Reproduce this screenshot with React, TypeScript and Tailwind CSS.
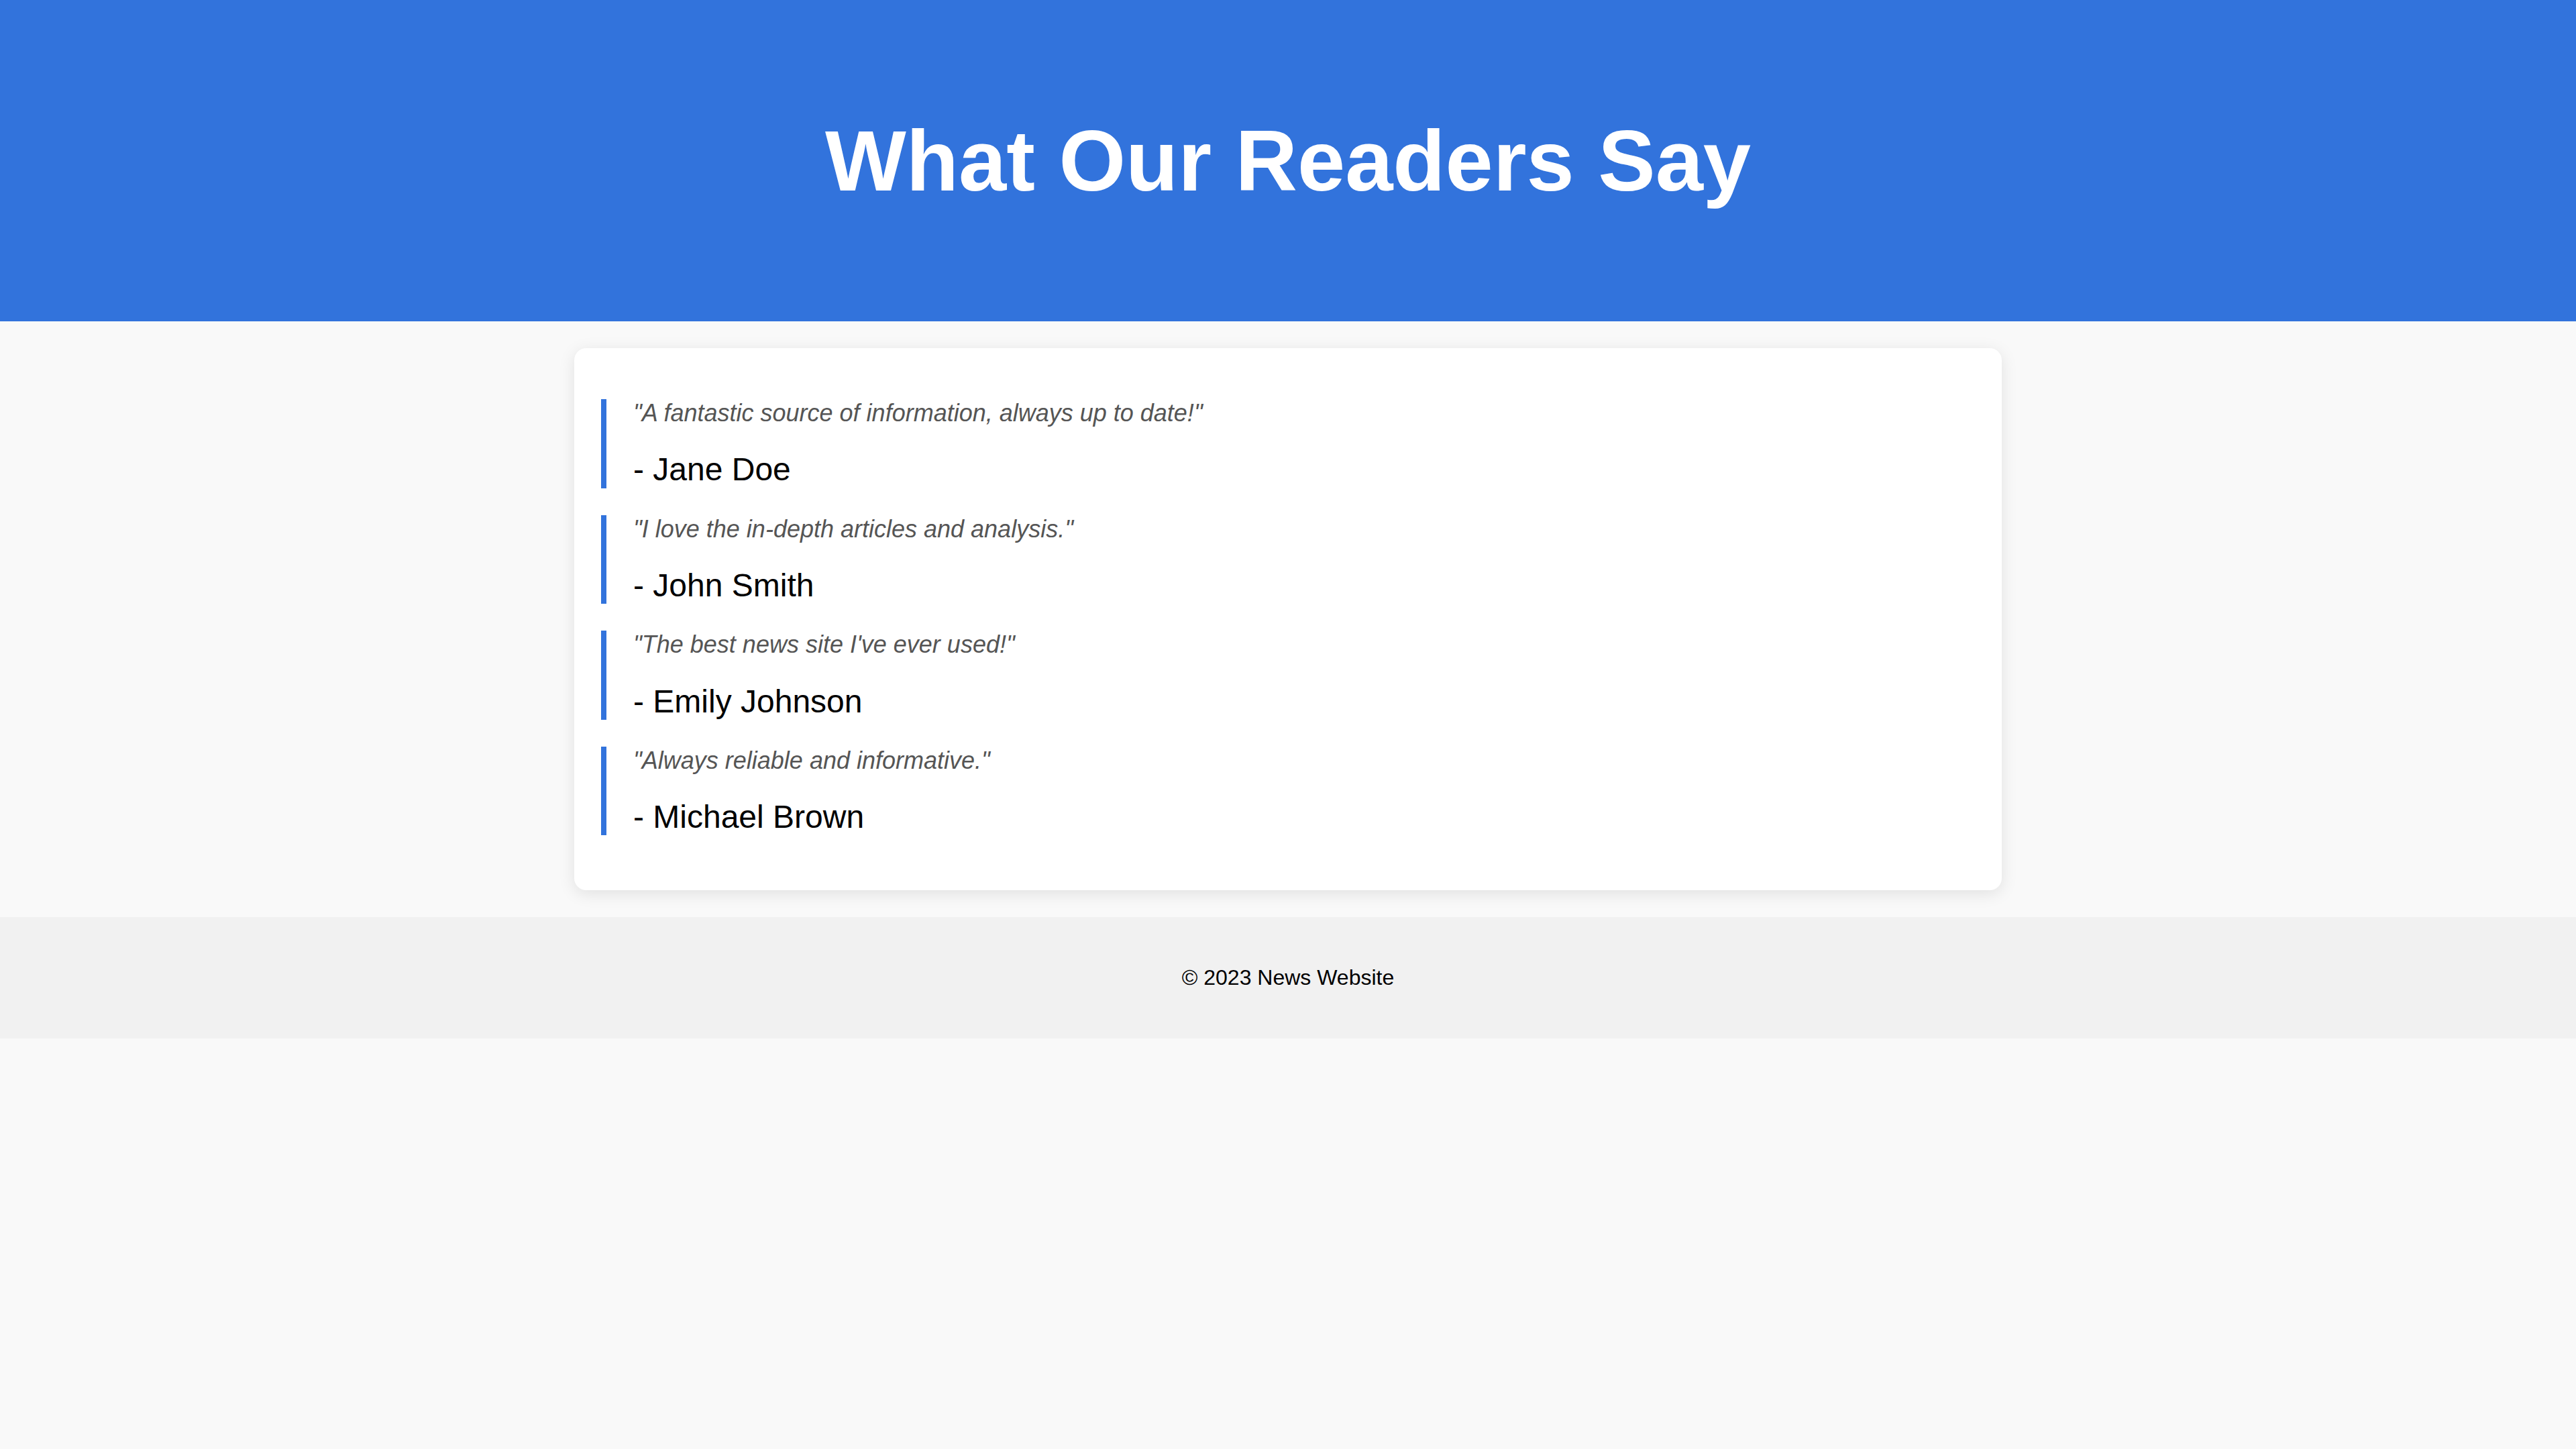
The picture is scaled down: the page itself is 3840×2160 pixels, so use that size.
import React from "react";

const testimonials = [
    { quote: "\"A fantastic source of information, always up to date!\"", name: "- Jane Doe" },
    { quote: "\"I love the in-depth articles and analysis.\"", name: "- John Smith" },
    { quote: "\"The best news site I've ever used!\"", name: "- Emily Johnson" },
    { quote: "\"Always reliable and informative.\"", name: "- Michael Brown" },
];

export default function App() {
    return (
        <div className="min-h-screen bg-[#f9f9f9] font-['Liberation_Sans',Arial,sans-serif]">
            <header className="flex h-[479px] items-center justify-center bg-[#3273dc]">
                <h1 className="text-[128px] font-bold leading-none text-white">What Our Readers Say</h1>
            </header>
            <main className="py-10">
                <section className="mx-auto flex w-[2128px] flex-col gap-10 rounded-[18px] bg-white px-10 pt-[76px] pb-[82px] shadow-[0_5px_25px_rgba(0,0,0,0.1)]">
                    {testimonials.map((t) => (
                        <Testimonial key={t.name} quote={t.quote} name={t.name} />
                    ))}
                </section>
            </main>
            <footer className="flex h-[181px] items-center justify-center bg-[#f1f1f1]">
                <p className="text-[32px] leading-[1.15] text-black">© 2023 News Website</p>
            </footer>
        </div>
    );
}

interface TestimonialProps {
    quote: string;
    name: string;
}
const Testimonial: React.FC<TestimonialProps> = ({ quote, name }) => {
    return (
        <blockquote className="border-l-8 border-[#3273dc] pl-10">
            <p className="text-[36px] leading-[1.15] italic text-[#555555]">{quote}</p>
            <p className="mt-[36px] text-[48px] leading-[1.15] text-black">{name}</p>
        </blockquote>
    );
};
